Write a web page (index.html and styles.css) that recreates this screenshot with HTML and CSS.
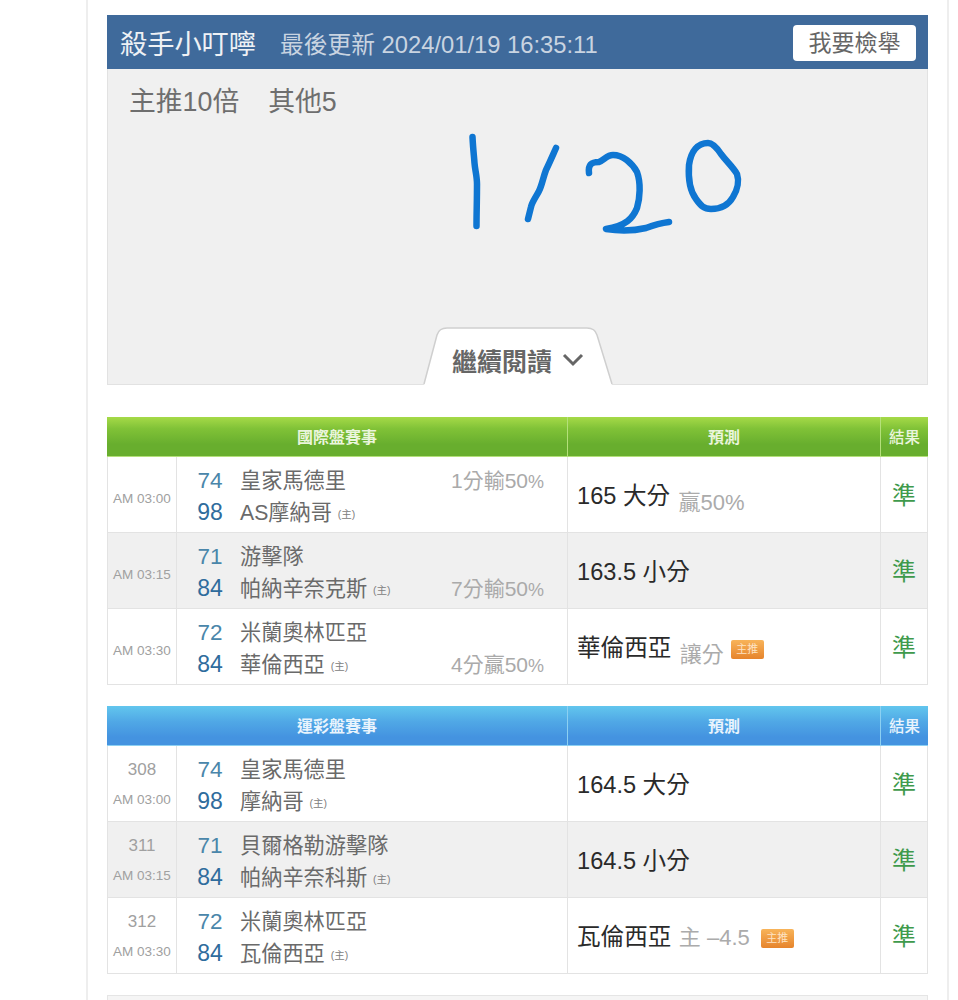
FILE: index.html
```html
<!DOCTYPE html>
<html lang="zh-Hant">
<head>
<meta charset="utf-8">
<title>殺手小叮嚀</title>
<link rel="stylesheet" href="styles.css">
</head>
<body>
<main class="page">
  <section class="article">
    <header class="article-head">
      <h1 class="author">殺手小叮嚀</h1>
      <span class="updated">最後更新 2024/01/19 16:35:11</span>
      <a class="report">我要檢舉</a>
    </header>
    <div class="article-body">
      <p class="summary"><span>主推10倍</span><span>其他5</span></p>
      <svg class="scribble" viewBox="0 0 958 400" aria-hidden="true">
        <path d="M471.5 137C472 148 473 156 473.5 163C474 170 476 176 476 184C476 200 475.5 214 475.5 226"/>
        <path d="M555 148C551 157 548 164 545 170C542 178 541 185 538 191C535 197 531 202 530 207C529 211 528 215 527 219"/>
        <path d="M588 173C587 165 590 162 598 162C603 160 606 155 612 155C622 155 631 163 636 172C640 183 639 198 636 208C632 218 625 226 605 229C618 231 632 231 645 228C653 225 660 223 668 222"/>
        <path d="M707 143C697 143 690 151 688 165C687 180 689 191 695 199C700 206 703 209 710 209C720 209 727 206 732 197C737 189 738 180 736 174C732 167 726 162 720 154C716 148 712 143 707 143Z"/>
      </svg>
      <div class="more">
        <svg class="more-shape" viewBox="0 0 190 58" aria-hidden="true">
          <path class="more-fill" d="M1 58L14 8Q16 1 24 1H164Q172 1 174 8L189 58Z"/>
          <path class="more-line" d="M1 57L14 8Q16 1 24 1H164Q172 1 174 8L189 57"/>
        </svg>
        <span class="more-label">繼續閱讀</span>
        <svg class="more-chevron" viewBox="0 0 22 14" aria-hidden="true"><path d="M2 2L11 11L20 2"/></svg>
      </div>
    </div>
  </section>

  <table class="games games-green">
    <colgroup><col class="col-time"><col class="col-team"><col class="col-pick"><col class="col-result"></colgroup>
    <thead><tr><th colspan="2">國際盤賽事</th><th>預測</th><th>結果</th></tr></thead>
    <tbody>
      <tr>
        <td class="time"><span class="clock">AM 03:00</span></td>
        <td class="teams">
          <div class="line"><span class="score">74</span><span class="name">皇家馬德里</span><span class="note">1分輸50<small>%</small></span></div>
          <div class="line"><span class="score home">98</span><span class="name">AS摩納哥 <small class="mark">(主)</small></span></div>
        </td>
        <td class="pick"><span class="main">165 大分</span> <span class="side low">贏50%</span></td>
        <td class="result">準</td>
      </tr>
      <tr>
        <td class="time"><span class="clock">AM 03:15</span></td>
        <td class="teams">
          <div class="line"><span class="score">71</span><span class="name">游擊隊</span></div>
          <div class="line"><span class="score home">84</span><span class="name">帕納辛奈克斯 <small class="mark">(主)</small></span><span class="note">7分輸50<small>%</small></span></div>
        </td>
        <td class="pick"><span class="main">163.5 小分</span></td>
        <td class="result">準</td>
      </tr>
      <tr>
        <td class="time"><span class="clock">AM 03:30</span></td>
        <td class="teams">
          <div class="line"><span class="score">72</span><span class="name">米蘭奧林匹亞</span></div>
          <div class="line"><span class="score home">84</span><span class="name">華倫西亞 <small class="mark">(主)</small></span><span class="note">4分贏50<small>%</small></span></div>
        </td>
        <td class="pick"><span class="main">華倫西亞</span> <span class="side low">讓分</span><span class="badge raised">主推</span></td>
        <td class="result">準</td>
      </tr>
    </tbody>
  </table>

  <table class="games games-blue">
    <colgroup><col class="col-time"><col class="col-team"><col class="col-pick"><col class="col-result"></colgroup>
    <thead><tr><th colspan="2">運彩盤賽事</th><th>預測</th><th>結果</th></tr></thead>
    <tbody>
      <tr>
        <td class="time"><span class="num">308</span><span class="clock">AM 03:00</span></td>
        <td class="teams">
          <div class="line"><span class="score">74</span><span class="name">皇家馬德里</span></div>
          <div class="line"><span class="score home">98</span><span class="name">摩納哥 <small class="mark">(主)</small></span></div>
        </td>
        <td class="pick"><span class="main">164.5 大分</span></td>
        <td class="result">準</td>
      </tr>
      <tr>
        <td class="time"><span class="num">311</span><span class="clock">AM 03:15</span></td>
        <td class="teams">
          <div class="line"><span class="score">71</span><span class="name">貝爾格勒游擊隊</span></div>
          <div class="line"><span class="score home">84</span><span class="name">帕納辛奈科斯 <small class="mark">(主)</small></span></div>
        </td>
        <td class="pick"><span class="main">164.5 小分</span></td>
        <td class="result">準</td>
      </tr>
      <tr>
        <td class="time"><span class="num">312</span><span class="clock">AM 03:30</span></td>
        <td class="teams">
          <div class="line"><span class="score">72</span><span class="name">米蘭奧林匹亞</span></div>
          <div class="line"><span class="score home">84</span><span class="name">瓦倫西亞 <small class="mark">(主)</small></span></div>
        </td>
        <td class="pick"><span class="main">瓦倫西亞</span> <span class="side">主 –4.5</span><span class="badge">主推</span></td>
        <td class="result">準</td>
      </tr>
    </tbody>
  </table>

  <div class="next-panel"></div>
</main>
</body>
</html>
```

FILE: styles.css
```css
* { box-sizing: border-box; }
html, body { margin: 0; padding: 0; background: #fff; }
body {
  font-family: "Liberation Sans", "Noto Sans CJK TC", sans-serif;
  color: #666;
}
.page {
  width: 863px;
  height: 1000px;
  overflow: hidden;
  margin-left: 86px;
  padding: 15px 19px 0;
  border-left: 2px solid #eee;
  border-right: 2px solid #eee;
}
.article { margin-bottom: 32px; }
.article-head {
  display: flex;
  align-items: center;
  height: 54px;
  padding: 0 12px 0 13px;
  background: #3f6a9b;
}
.author {
  margin: 0;
  font-size: 27.2px;
  font-weight: 400;
  color: #eef1f5;
}
.updated {
  margin-left: 24px;
  font-size: 23.75px;
  color: #c9d4e1;
}
.report {
  margin: 1px 0 0 auto;
  width: 123px;
  height: 36px;
  line-height: 36px;
  text-align: center;
  font-size: 23px;
  color: #666;
  background: #fff;
  border-radius: 4px;
}
.article-body {
  position: relative;
  height: 316px;
  background: #f0f0f0;
  border: 1px solid #e2e2e2;
  border-top: 0;
}
.summary {
  display: flex;
  gap: 29px;
  margin: 0;
  padding: 15px 0 0 21px;
  font-size: 26.8px;
  line-height: 36px;
  color: #6e6e6e;
}
.scribble {
  position: absolute;
  left: -107px;
  top: -69px;
  width: 958px;
  height: 400px;
  fill: none;
  stroke: #0f76d2;
  stroke-width: 6.5;
  stroke-linecap: round;
  stroke-linejoin: round;
}
.more {
  position: absolute;
  left: 315px;
  bottom: -1px;
  width: 190px;
  height: 58px;
  display: flex;
  align-items: center;
  padding: 7px 0 0 29px;
  font-size: 25px;
}
.more-shape { position: absolute; left: 0; top: 0; width: 190px; height: 58px; }
.more-fill { fill: #fff; }
.more-line { fill: none; stroke: #cfcfcf; stroke-width: 1.5; }
.more-label { position: relative; font-weight: 700; color: #666; white-space: nowrap; }
.more-chevron {
  position: relative;
  width: 22px;
  height: 14px;
  margin-left: 10px;
  fill: none;
  stroke: #666;
  stroke-width: 3;
}
.games {
  width: 821px;
  margin-bottom: 21px;
  table-layout: fixed;
  border-collapse: separate;
  border-spacing: 0;
}
.col-time { width: 70px; }
.col-team { width: 391px; }
.col-pick { width: 313px; }
.col-result { width: 47px; }
.games th {
  height: 40px;
  padding: 0 0 1px;
  font-size: 16px;
  font-weight: 700;
  border-right: 1px solid;
  border-bottom: 1px solid;
}
.games th:last-child { border-right: 0; font-size: 15.5px; font-weight: 500; }
.games-green th {
  color: #eaf5dc;
  background: linear-gradient(#a6da48 0, #80c237 30%, #68ae2e 70%, #68ae2e 100%);
  border-color: #b4e07a;
}
.games-blue th {
  color: #e9f4fd;
  background: linear-gradient(#62c6ee 0, #50a8e6 40%, #4493e0 80%, #4493e0 100%);
  border-color: #8cd0f2;
}
.games td {
  height: 76px;
  padding: 0;
  border-right: 1px solid #e3e3e3;
  border-bottom: 1px solid #e3e3e3;
  vertical-align: middle;
}
.games td:first-child { border-left: 1px solid #e3e3e3; }
.games tbody tr:nth-child(even) td { background: #f0f0f0; }
.time { text-align: center; color: #a0a0a0; }
.games-green td.time { padding-top: 9px; }
.games-blue td.time { padding-top: 2px; }
.num { display: block; font-size: 17px; line-height: 30px; }
.clock { display: block; font-size: 13.5px; line-height: 30px; white-space: nowrap; }
.line {
  display: grid;
  grid-template-columns: 60px 1fr 117px;
  align-items: center;
  height: 32px;
  padding-left: 3px;
}
.score { padding-top: 4px; text-align: center; font-size: 22.5px; color: #4a86aa; }
.score.home { padding-top: 2px; color: #2f6c9d; font-size: 23px; }
.name { padding-bottom: 2px; font-size: 21.2px; color: #6a6a6a; white-space: nowrap; }
.mark { font-size: 10.5px; color: #808080; vertical-align: 2px; }
.note { grid-column: 3; padding-left: 1px; font-size: 21px; color: #aaa; white-space: nowrap; }
.note small { font-size: 18px; }
.games td.pick { padding: 0 0 2px 9px; white-space: nowrap; }
.main { font-size: 23.6px; color: #2a2a2a; }
.side { margin-left: 3px; font-size: 22px; color: #ababab; }
.side.low { position: relative; top: 6px; margin-left: 4px; }
.badge {
  position: relative;
  top: -3px;
  display: inline-block;
  width: 33px;
  height: 19px;
  margin-left: 11px;
  line-height: 19px;
  text-align: center;
  font-size: 11px;
  color: #fde3c4;
  background: linear-gradient(#f8b45a, #e6842c);
  border-radius: 2px;
}
.badge.raised { margin-left: 7px; }
.games td.result { padding-bottom: 3px; text-align: center; font-size: 24px; color: #3f9a4c; }
.next-panel {
  height: 5px;
  background: #f5f5f5;
  border: 1px solid #e5e5e5;
  border-bottom: 0;
}
```
